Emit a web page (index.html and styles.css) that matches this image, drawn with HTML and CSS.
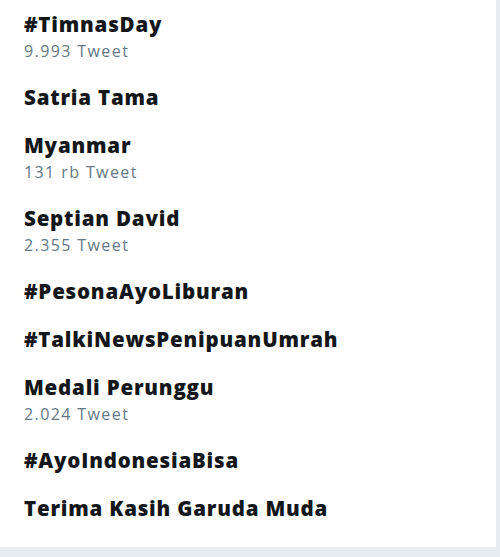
FILE: index.html
```html
<!DOCTYPE html>
<html lang="id">
<head>
    <meta charset="UTF-8">
    <meta name="viewport" content="width=device-width, initial-scale=1.0">
    <title>Tren</title>
    <link rel="stylesheet" href="styles.css">
</head>
<body>
    <div class="trends">
        <div class="trend">
            <div class="trend-name">#TimnasDay</div>
            <div class="trend-count">9.993 Tweet</div>
        </div>
        <div class="trend">
            <div class="trend-name">Satria Tama</div>
        </div>
        <div class="trend">
            <div class="trend-name">Myanmar</div>
            <div class="trend-count">131 rb Tweet</div>
        </div>
        <div class="trend">
            <div class="trend-name">Septian David</div>
            <div class="trend-count">2.355 Tweet</div>
        </div>
        <div class="trend">
            <div class="trend-name">#PesonaAyoLiburan</div>
        </div>
        <div class="trend">
            <div class="trend-name">#TalkiNewsPenipuanUmrah</div>
        </div>
        <div class="trend">
            <div class="trend-name">Medali Perunggu</div>
            <div class="trend-count">2.024 Tweet</div>
        </div>
        <div class="trend">
            <div class="trend-name">#AyoIndonesiaBisa</div>
        </div>
        <div class="trend">
            <div class="trend-name">Terima Kasih Garuda Muda</div>
        </div>
    </div>
</body>
</html>
```

FILE: styles.css
```css
body {
    margin: 0;
    background-color: #e6ecf0;
    font-family: 'Open Sans', 'Noto Sans', sans-serif;
    color: #14171a;
}

.trends {
    width: 496px;
    height: 547px;
    background-color: #fff;
}

.trend {
    padding: 11px 24px;
}

.trend-name {
    font-size: 20.5px;
    font-weight: 800;
    line-height: 26px;
    letter-spacing: 0.8px;
}

.trend-count {
    margin-top: 3px;
    font-size: 16px;
    line-height: 22px;
    letter-spacing: 1.4px;
    color: #657786;
}
```
